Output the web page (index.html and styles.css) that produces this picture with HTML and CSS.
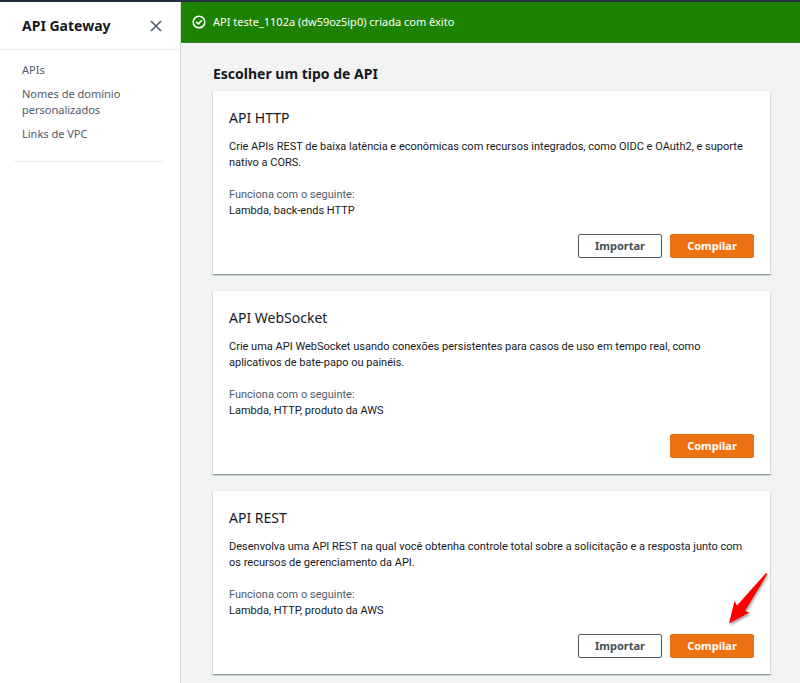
FILE: index.html
```html
<!DOCTYPE html>
<html lang="pt-BR">
<head>
    <meta charset="utf-8">
    <title>API Gateway</title>
    <link rel="stylesheet" href="styles.css">
</head>
<body>

    <div class="app">
        <aside class="sidebar">
            <div class="sidebar-header">
                <h2>API Gateway</h2>
                <button type="button" class="close" aria-label="Fechar">
                    <svg width="12" height="12" viewBox="0 0 12 12">
                        <path d="M1 1L11 11M11 1L1 11" fill="none" stroke="currentColor" stroke-width="1.6"/>
                    </svg>
                </button>
            </div>
            <nav class="sidebar-nav">
                <a href="#">APIs</a>
                <a href="#">Nomes de domínio personalizados</a>
                <a href="#">Links de VPC</a>
            </nav>
        </aside>

        <main class="main">
            <div class="flash">
                <svg width="14" height="14" viewBox="0 0 14 14" fill="none" stroke="currentColor" stroke-width="1.6">
                    <circle cx="7" cy="7" r="5.8"/>
                    <path d="M4.2 6.8L6.4 8.9L9.9 5.3"/>
                </svg>
                <span>API teste_1102a (dw59oz5ip0) criada com êxito</span>
            </div>

            <div class="content">
                <h1>Escolher um tipo de API</h1>

                <section class="card">
                    <h3>API HTTP</h3>
                    <p>Crie APIs REST de baixa latência e econômicas com recursos integrados, como OIDC e OAuth2, e suporte nativo a CORS.</p>
                    <div class="works-with">
                        <div class="label">Funciona com o seguinte:</div>
                        <div>Lambda, back-ends HTTP</div>
                    </div>
                    <div class="actions">
                        <button type="button" class="btn">Importar</button>
                        <button type="button" class="btn btn-primary">Compilar</button>
                    </div>
                </section>

                <section class="card">
                    <h3>API WebSocket</h3>
                    <p>Crie uma API WebSocket usando conexões persistentes para casos de uso em tempo real, como aplicativos de bate-papo ou painéis.</p>
                    <div class="works-with">
                        <div class="label">Funciona com o seguinte:</div>
                        <div>Lambda, HTTP, produto da AWS</div>
                    </div>
                    <div class="actions">
                        <button type="button" class="btn btn-primary">Compilar</button>
                    </div>
                </section>

                <section class="card">
                    <h3>API REST</h3>
                    <p>Desenvolva uma API REST na qual você obtenha controle total sobre a solicitação e a resposta junto com os recursos de gerenciamento da API.</p>
                    <div class="works-with">
                        <div class="label">Funciona com o seguinte:</div>
                        <div>Lambda, HTTP, produto da AWS</div>
                    </div>
                    <div class="actions">
                        <button type="button" class="btn">Importar</button>
                        <button type="button" class="btn btn-primary">Compilar</button>
                    </div>
                    <!-- Arrow pointing at the build button -->
                    <svg class="arrow" width="44" height="56" viewBox="0 0 44 56">
                        <path d="M40 3L41.3 4L19 41L23.5 42.5L3 53.5L8.5 31L11 35.5Z" fill="#ff0000"/>
                    </svg>
                </section>
            </div>
        </main>
    </div>

</body>
</html>
```

FILE: styles.css
```css
* {
    box-sizing: border-box;
}

body {
    font-family: "Noto Sans", sans-serif;
    font-size: 11px;
    line-height: 16px;
    color: #16191f;
    background-color: #f2f3f3;
    margin: 0;
}

h1, h2, h3, p {
    margin: 0;
}

.app {
    display: flex;
    min-height: 100vh;
    border-top: 2px solid #232f3e;
}

/* Sidebar */
.sidebar {
    flex: 0 0 181px;
    background-color: #fff;
    border-right: 1px solid #d5dbdb;
}

.sidebar-header {
    display: flex;
    align-items: center;
    justify-content: space-between;
    height: 48px;
    padding: 0 16px 0 22px;
    border-bottom: 1px solid #eaeded;
}

.sidebar-header h2 {
    font-size: 14px;
    line-height: 20px;
}

.close {
    display: flex;
    padding: 2px;
    border: none;
    background: none;
    color: #4f5a68;
    cursor: pointer;
}

.sidebar-nav {
    display: flex;
    flex-direction: column;
    gap: 8px;
    margin: 0 16px 0 14px;
    padding: 12px 8px 19px;
    border-bottom: 1px solid #eaeded;
}

.sidebar-nav a {
    color: #4f5a68;
    text-decoration: none;
}

/* Main column */
.main {
    flex: 1;
    min-width: 0;
}

.flash {
    display: flex;
    align-items: center;
    gap: 7px;
    height: 41px;
    padding: 0 11px;
    background-color: #1d8102;
    border-bottom: 1px solid #3f7a35;
    color: #fff;
}

.content {
    display: flex;
    flex-direction: column;
    gap: 16px;
    padding: 21px 30px 9px 32px;
}

.content h1 {
    font-size: 14px;
    line-height: 20px;
    margin-bottom: -9px;
}

.card {
    position: relative;
    padding: 16px;
    background-color: #fff;
    border-bottom: 1px solid #879596;
    box-shadow: 1px 1px 1px #d5dbdb, -1px 0 1px #d5dbdb;
}

.card h3 {
    font-size: 14px;
    line-height: 22px;
    font-weight: 400;
    margin-bottom: 10px;
}

.card p,
.works-with {
    font-family: Roboto, "Noto Sans", sans-serif;
}

.works-with {
    margin: 16px 0 15px;
}

.label {
    color: #4f5a68;
}

.actions {
    display: flex;
    justify-content: flex-end;
    gap: 8px;
}

.btn {
    width: 84px;
    height: 24px;
    padding: 0;
    border: 1px solid #545b64;
    border-radius: 2px;
    background-color: #fff;
    color: #444c57;
    font: inherit;
    font-weight: 700;
    cursor: pointer;
}

.btn-primary {
    background-color: #ec7211;
    border-color: #ec7211;
    color: #fff;
}

.arrow {
    position: absolute;
    right: 0;
    bottom: 48px;
    filter: drop-shadow(1px 2px 1px rgba(0, 0, 0, 0.35));
}
```
